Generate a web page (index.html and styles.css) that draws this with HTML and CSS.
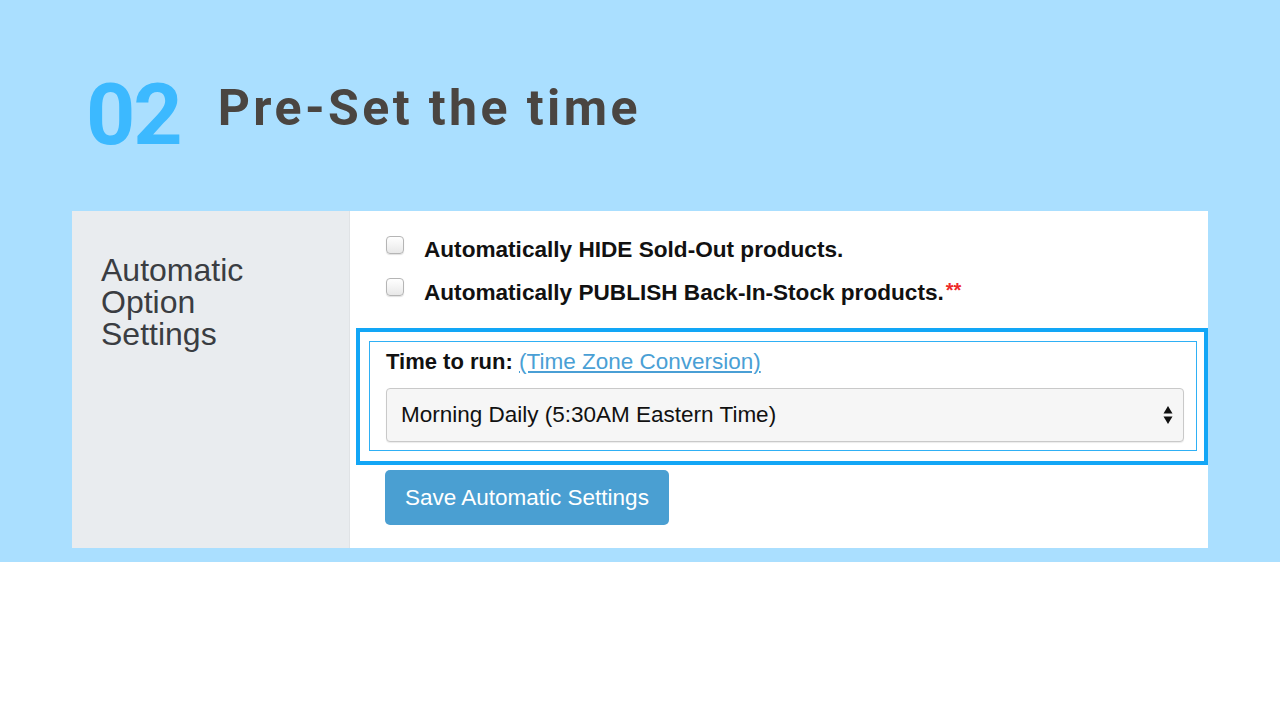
FILE: index.html
```html
<!DOCTYPE html>
<html lang="en">
<head>
    <meta charset="UTF-8">
    <meta name="viewport" content="width=device-width, initial-scale=1.0">
    <title>Pre-Set the time</title>
    <link rel="stylesheet" href="styles.css">
</head>
<body>
    <div class="hero">
        <div class="heading">
            <span class="step">02</span>
            <h1>Pre-Set the time</h1>
        </div>

        <div class="panel">
            <div class="panel-label">
                <span>Automatic Option Settings</span>
            </div>
            <div class="panel-body">
                <label class="check-row">
                    <input type="checkbox" class="check">
                    <span>Automatically HIDE Sold-Out products.</span>
                </label>
                <label class="check-row">
                    <input type="checkbox" class="check">
                    <span>Automatically PUBLISH Back-In-Stock products.<em class="req">**</em></span>
                </label>

                <div class="highlight">
                    <div class="highlight-inner">
                        <div class="time-label">
                            <strong>Time to run:</strong>
                            <a href="#">(Time Zone Conversion)</a>
                        </div>
                        <div class="select">
                            <span>Morning Daily (5:30AM Eastern Time)</span>
                            <svg class="select-arrows" width="10" height="20" viewBox="0 0 10 20">
                                <path d="M5 1 L9.5 8.5 L0.5 8.5 Z" fill="#111"/>
                                <path d="M0.5 11.5 L9.5 11.5 L5 19 Z" fill="#111"/>
                            </svg>
                        </div>
                    </div>
                </div>

                <button class="save-btn">Save Automatic Settings</button>
            </div>
        </div>
    </div>
</body>
</html>
```

FILE: styles.css
```css
body {
    margin: 0;
    background: #ffffff;
    font-family: 'Liberation Sans', Arial, sans-serif;
}

.hero {
    background: #aadfff;
    height: 562px;
    padding-top: 72px;
    box-sizing: border-box;
}

.heading {
    display: flex;
    align-items: flex-start;
    gap: 37px;
    padding-left: 86px;
    height: 139px;
}

.step {
    font-family: 'Roboto', 'DejaVu Sans', sans-serif;
    font-weight: 700;
    font-size: 86px;
    line-height: 1;
    color: #3cb9ff;
    letter-spacing: -2px;
}

h1 {
    margin: 11px 0 0 0;
    font-family: 'Roboto', 'DejaVu Sans', sans-serif;
    font-weight: 700;
    font-size: 50px;
    line-height: 1;
    color: #4a4541;
    letter-spacing: 3.4px;
}

.panel {
    display: grid;
    grid-template-columns: 278px 1fr;
    margin: 0 72px;
    height: 337px;
    background: #ffffff;
}

.panel-label {
    background: #e9ecef;
    border-right: 1px solid #e0e3e6;
    padding: 43px 0 0 29px;
    font-size: 32px;
    line-height: 32px;
    color: #3a3d42;
}

.panel-label span {
    display: block;
    width: 180px;
}

.panel-body {
    padding: 18px 0 0 6px;
}

.check-row {
    display: flex;
    align-items: center;
    gap: 20px;
    padding-left: 30px;
    height: 42px;
    font-size: 22.6px;
    font-weight: 700;
    color: #111111;
}

.check {
    appearance: none;
    -webkit-appearance: none;
    margin: -11px 0 0 0;
    width: 18px;
    height: 18px;
    border: 1px solid #b5b5b5;
    border-radius: 4px;
    background: linear-gradient(#ffffff, #e8e8e8);
    box-shadow: 0 1px 1px rgba(0, 0, 0, 0.12);
}

.req {
    font-style: normal;
    color: #ee2a2a;
    font-size: 20px;
    vertical-align: 3px;
    margin-left: 2px;
}

.highlight {
    margin-top: 15px;
    border: 4px solid #12a6f6;
    padding: 9px 7px 10px 9px;
}

.highlight-inner {
    border: 1px solid #2fb0f5;
    padding: 7px 12px 8px 16px;
}

.time-label {
    font-size: 22.5px;
    color: #111111;
    margin-bottom: 13px;
}

.time-label strong {
    font-size: 22px;
}

.time-label a {
    color: #4a9fd5;
}

.select {
    display: flex;
    align-items: center;
    justify-content: space-between;
    height: 52px;
    border: 1px solid #c9c9c9;
    border-radius: 4px;
    background: #f6f6f6;
    padding: 0 10px 0 14px;
    font-size: 22.5px;
    color: #111111;
    box-shadow: 0 1px 1px rgba(0, 0, 0, 0.08);
}

.save-btn {
    margin: 5px 0 0 29px;
    height: 55px;
    padding: 0 20px;
    border: none;
    border-radius: 5px;
    background: #4a9fd2;
    color: #ffffff;
    font-family: 'Liberation Sans', Arial, sans-serif;
    font-size: 22.5px;
}
```
